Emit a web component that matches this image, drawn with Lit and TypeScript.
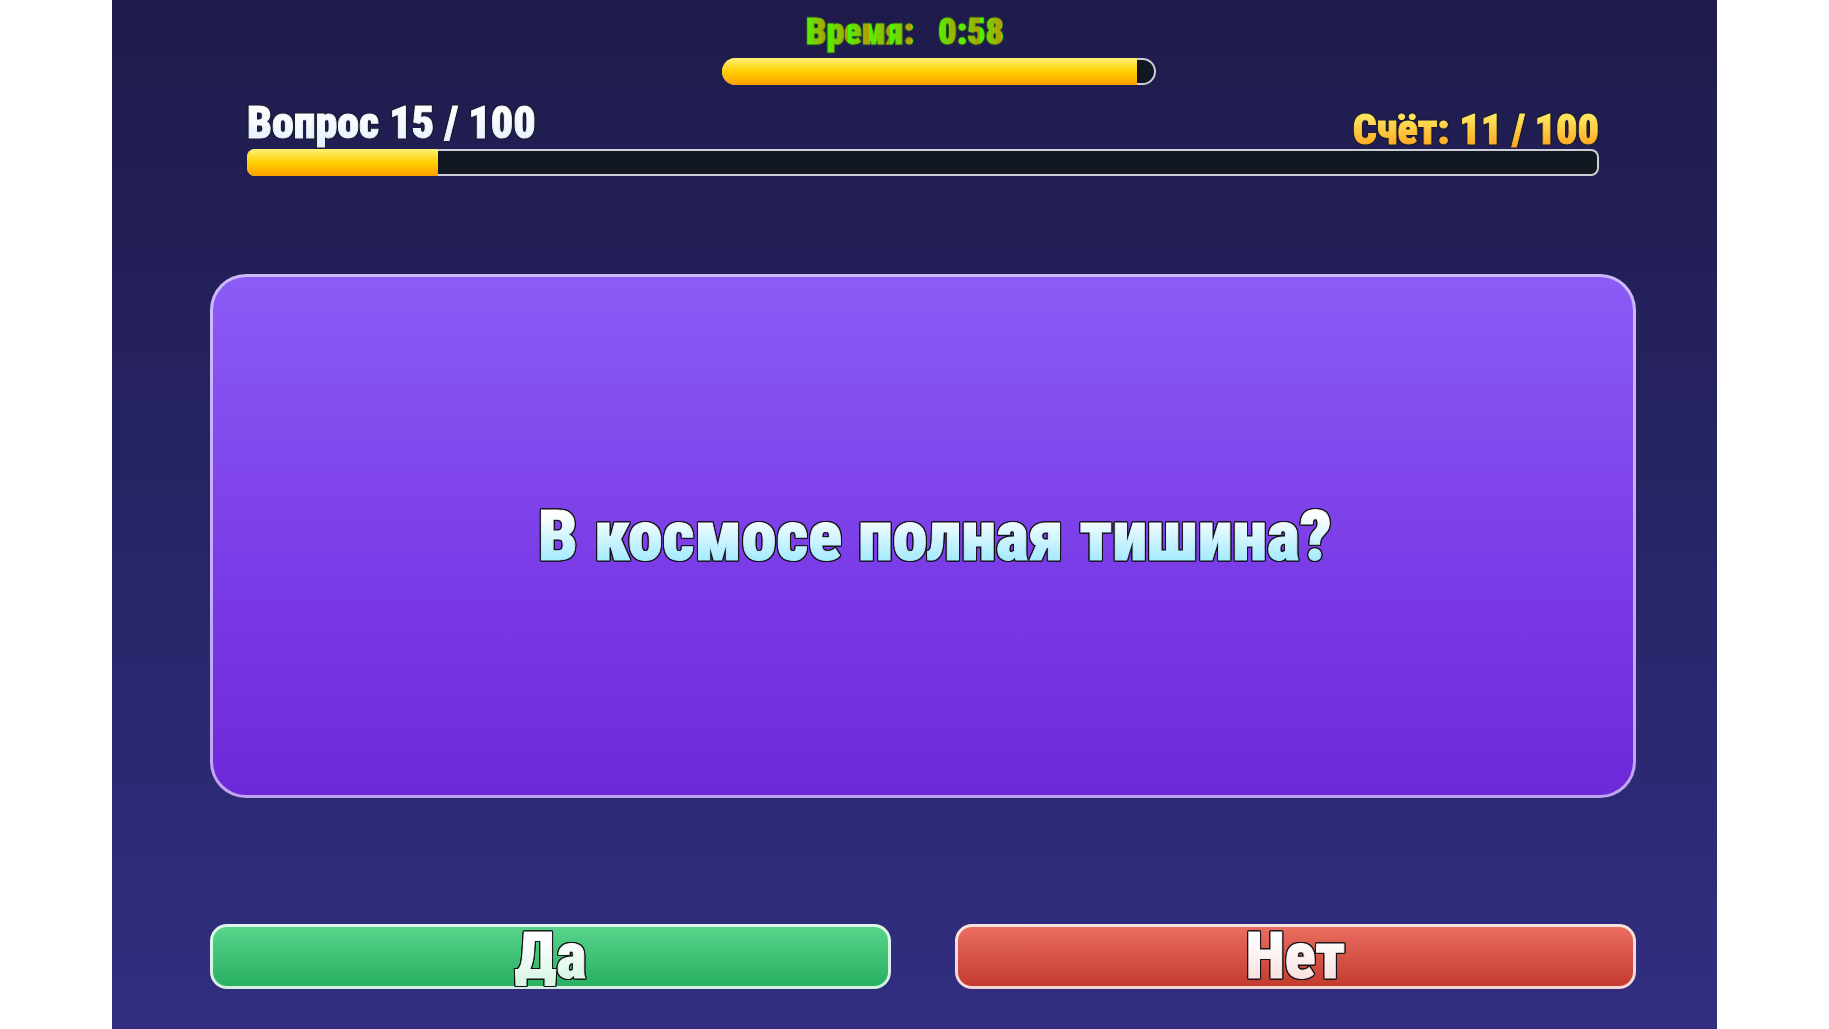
import { LitElement, html, css } from "lit";
import { customElement, property, state } from "lit/decorators.js";
import { styleMap } from "lit/directives/style-map.js";

@customElement("quiz-bar")
class QuizBar extends LitElement {
  @property({ type: Number }) value = 0;
  @property() label = "";

  static styles = css`
    :host {
      display: block;
      --bar-radius: 8px;
    }
    .track {
      height: 27px;
      border-radius: var(--bar-radius);
      overflow: hidden;
      background: #111822;
      box-shadow: inset 0 0 0 2px #ccd0d6;
    }
    .fill {
      height: 100%;
      background: linear-gradient(#fff176, #ffd000 50%, #ffa000);
    }
  `;

  render() {
    return html`
      <div
        class="track"
        role="progressbar"
        aria-label=${this.label}
        aria-valuemin="0"
        aria-valuemax="100"
        aria-valuenow=${this.value}
      >
        <div class="fill" style=${styleMap({ width: `${this.value}%` })}></div>
      </div>
    `;
  }
}

@customElement("app-root")
class AppRoot extends LitElement {
  @state() private total = 100;
  @state() private question = 15;
  @state() private score = 11;
  @state() private time = "0:58";

  static styles = css`
    :host {
      display: block;
      background: #fff;
      font-family: "Roboto Condensed", Roboto, "Liberation Sans", sans-serif;
      font-weight: 900;
    }
    .stage {
      box-sizing: border-box;
      min-height: 100vh;
      margin: 0 112px;
      padding: 9px 81px 40px 98px;
      display: flex;
      flex-direction: column;
      background: linear-gradient(#1e1b4b, #312e81);
    }
    /* Gradient lettering, thickened a little, with a dark contour around it. */
    .ink {
      color: transparent;
      -webkit-background-clip: text;
      background-clip: text;
      -webkit-text-stroke: 1px transparent;
      filter: drop-shadow(1px 0 0 var(--contour)) drop-shadow(-1px 0 0 var(--contour))
        drop-shadow(0 1px 0 var(--contour)) drop-shadow(0 -1px 0 var(--contour));
      --contour: #151218;
    }
    .timer {
      align-self: center;
      width: 30.4%;
      margin-left: 32px;
    }
    .clock {
      display: flex;
      justify-content: center;
      gap: 24px;
      padding-right: 68px;
      margin-bottom: 3px;
      font-size: 36px;
      line-height: 46px;
    }
    .clock .ink {
      --contour: rgba(50, 130, 10, 0.3);
      background-image: repeating-linear-gradient(90deg, #4cf800, #b89a00 21px);
    }
    .timer quiz-bar {
      --bar-radius: 14px;
    }
    .status {
      margin: 19px 37px 98px;
    }
    .counts {
      display: flex;
      justify-content: space-between;
      align-items: flex-end;
      line-height: 38px;
    }
    .counts .ink {
      --contour: rgba(20, 20, 20, 0.4);
    }
    .asked {
      padding-bottom: 7px;
      font-size: 44px;
      background-image: linear-gradient(#fff 10%, #dff0ff);
    }
    .score {
      font-size: 42px;
      background-image: linear-gradient(#fff06a, #ffa31a);
    }
    .card {
      flex: 1;
      box-sizing: border-box;
      display: flex;
      align-items: center;
      justify-content: center;
      margin-bottom: 126px;
      padding-left: 24px;
      border: 3px solid rgba(255, 255, 255, 0.58);
      border-radius: 36px;
      background: linear-gradient(#8b5cf6, #7c3fe8 50%, #6d28d9) border-box;
    }
    .question {
      margin: 0;
      font-size: 70px;
      line-height: 84px;
      font-weight: 900;
      text-align: center;
      background-image: linear-gradient(#fff 25%, #9be8ff 85%);
    }
    .answers {
      display: grid;
      grid-template-columns: 1fr 1fr;
      gap: 64px;
    }
    .answer {
      height: 65px;
      padding: 0;
      border: 3px solid rgba(255, 255, 255, 0.8);
      border-radius: 17px;
      font: inherit;
      font-size: 64px;
      line-height: 59px;
      cursor: pointer;
    }
    .yes {
      background: linear-gradient(#58d68d, #27ae60) border-box;
    }
    .no {
      background: linear-gradient(#ec7063, #c0392b) border-box;
    }
    .answer .ink {
      display: block;
    }
    .yes .ink {
      background-image: linear-gradient(#fff 20%, #d4f5e2);
    }
    .no .ink {
      background-image: linear-gradient(#fff 20%, #fadbd8);
    }
  `;

  render() {
    return html`
      <main class="stage">
        <section class="timer">
          <div class="clock"><span class="ink">Время:</span><span class="ink">${this.time}</span></div>
          <quiz-bar label="Время" .value=${95.6}></quiz-bar>
        </section>
        <section class="status">
          <div class="counts">
            <div class="ink asked">Вопрос ${this.question} / ${this.total}</div>
            <div class="ink score">Счёт: ${this.score} / ${this.total}</div>
          </div>
          <quiz-bar label="Вопрос" .value=${14.1}></quiz-bar>
        </section>
        <section class="card">
          <h1 class="ink question">В космосе полная тишина?</h1>
        </section>
        <div class="answers">
          <button class="answer yes" type="button"><span class="ink">Да</span></button>
          <button class="answer no" type="button"><span class="ink">Нет</span></button>
        </div>
      </main>
    `;
  }
}
